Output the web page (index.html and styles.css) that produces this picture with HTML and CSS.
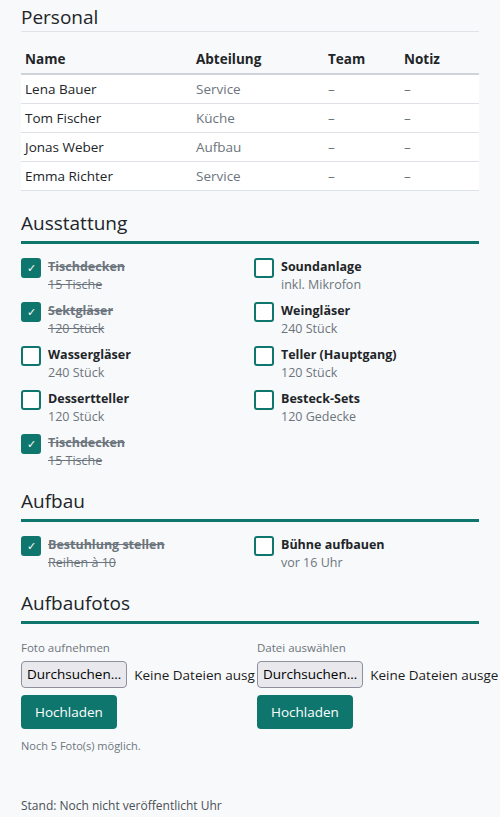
FILE: index.html
```html
<!DOCTYPE html>
<html lang="de">
<head>
<meta charset="utf-8">
<title>Aufbau</title>
<link rel="stylesheet" href="styles.css">
</head>
<body>
<main class="page">
  <section class="block">
    <h2 class="title title-plain">Personal</h2>
    <table class="staff">
      <thead>
        <tr><th class="c-name">Name</th><th class="c-dept">Abteilung</th><th class="c-team">Team</th><th class="c-note">Notiz</th></tr>
      </thead>
      <tbody>
        <tr><td>Lena Bauer</td><td class="muted">Service</td><td class="muted">–</td><td class="muted">–</td></tr>
        <tr><td>Tom Fischer</td><td class="muted">Küche</td><td class="muted">–</td><td class="muted">–</td></tr>
        <tr><td>Jonas Weber</td><td class="muted">Aufbau</td><td class="muted">–</td><td class="muted">–</td></tr>
        <tr><td>Emma Richter</td><td class="muted">Service</td><td class="muted">–</td><td class="muted">–</td></tr>
      </tbody>
    </table>
  </section>

  <section class="block">
    <h2 class="title">Ausstattung</h2>
    <div class="checks">
      <div class="check done"><span class="box">✓</span><div class="txt"><div class="t">Tischdecken</div><div class="s">15 Tische</div></div></div>
      <div class="check"><span class="box"></span><div class="txt"><div class="t">Soundanlage</div><div class="s">inkl. Mikrofon</div></div></div>
      <div class="check done"><span class="box">✓</span><div class="txt"><div class="t">Sektgläser</div><div class="s">120 Stück</div></div></div>
      <div class="check"><span class="box"></span><div class="txt"><div class="t">Weingläser</div><div class="s">240 Stück</div></div></div>
      <div class="check"><span class="box"></span><div class="txt"><div class="t">Wassergläser</div><div class="s">240 Stück</div></div></div>
      <div class="check"><span class="box"></span><div class="txt"><div class="t">Teller (Hauptgang)</div><div class="s">120 Stück</div></div></div>
      <div class="check"><span class="box"></span><div class="txt"><div class="t">Dessertteller</div><div class="s">120 Stück</div></div></div>
      <div class="check"><span class="box"></span><div class="txt"><div class="t">Besteck-Sets</div><div class="s">120 Gedecke</div></div></div>
      <div class="check done"><span class="box">✓</span><div class="txt"><div class="t">Tischdecken</div><div class="s">15 Tische</div></div></div>
    </div>
  </section>

  <section class="block">
    <h2 class="title">Aufbau</h2>
    <div class="checks">
      <div class="check done"><span class="box">✓</span><div class="txt"><div class="t">Bestuhlung stellen</div><div class="s">Reihen à 10</div></div></div>
      <div class="check"><span class="box"></span><div class="txt"><div class="t">Bühne aufbauen</div><div class="s">vor 16 Uhr</div></div></div>
    </div>
  </section>

  <section class="block photos">
    <h2 class="title">Aufbaufotos</h2>
    <div class="uploads">
      <div class="upload">
        <div class="label">Foto aufnehmen</div>
        <div class="file"><span class="file-btn">Durchsuchen…</span><span class="file-txt">Keine Dateien ausg</span></div>
        <button class="primary" type="button">Hochladen</button>
        <div class="hint">Noch 5 Foto(s) möglich.</div>
      </div>
      <div class="upload">
        <div class="label">Datei auswählen</div>
        <div class="file"><span class="file-btn">Durchsuchen…</span><span class="file-txt">Keine Dateien ausge</span></div>
        <button class="primary" type="button">Hochladen</button>
      </div>
    </div>
  </section>

  <footer class="stand">Stand: Noch nicht veröffentlicht Uhr</footer>
</main>
</body>
</html>
```

FILE: styles.css
```css
html, body {
  margin: 0;
  padding: 0;
  overflow-x: hidden;
}
body {
  background: #f8f9fa;
  color: #212529;
  font-family: "Open Sans", "Noto Sans", sans-serif;
  font-size: 13.5px;
}
.page {
  width: 458px;
  padding: 1px 21px 0 21px;
}
.block {
  margin-bottom: 20px;
}
.title {
  margin: 0 0 14px 0;
  font-size: 19px;
  font-weight: 500;
  line-height: 24px;
  padding-bottom: 6px;
  border-bottom: 3px solid #0f766e;
  color: #212529;
}
.title-plain {
  margin-top: 4px;
  padding-bottom: 2px;
  border-bottom: 1px solid #dfe2e6;
  margin-bottom: 13px;
}
.staff {
  width: 100%;
  border-collapse: collapse;
}
.staff th {
  text-align: left;
  font-weight: 700;
  font-size: 13.5px;
  height: 28px;
  padding: 0 4px;
  border-bottom: 2px solid #ced4da;
}
.staff td {
  height: 28px;
  padding: 0 4px;
  background: #fff;
  border-bottom: 1px solid #dee2e6;
}
.staff .c-name { width: 163px; }
.staff .c-dept { width: 124px; }
.staff .c-team { width: 68px; }
.muted { color: #6c757d; }
.checks {
  display: grid;
  grid-template-columns: 225px 225px;
  column-gap: 8px;
  row-gap: 9px;
}
.check {
  display: flex;
  gap: 7px;
  align-items: flex-start;
}
.box {
  flex: none;
  width: 16px;
  height: 16px;
  border: 2px solid #0f766e;
  border-radius: 3px;
  background: #fff;
  color: #fff;
  font-size: 11px;
  line-height: 16px;
  text-align: center;
}
.done .box {
  background: #0f766e;
}
.t {
  font-weight: 700;
  font-size: 12.5px;
  line-height: 18px;
  color: #212529;
}
.s {
  font-size: 12.5px;
  line-height: 17px;
  color: #6c757d;
}
.done .t, .done .s {
  color: #6c757d;
  text-decoration: line-through;
}
.photos .title { margin-bottom: 16px; }
.uploads {
  display: grid;
  grid-template-columns: 236px 236px;
}
.upload {
  display: flex;
  flex-direction: column;
  align-items: flex-start;
}
.label {
  font-size: 11.5px;
  color: #6c757d;
  line-height: 16px;
  margin-bottom: 5px;
}
.file {
  display: flex;
  align-items: center;
  white-space: nowrap;
}
.file-btn {
  flex: none;
  box-sizing: border-box;
  height: 27px;
  line-height: 25px;
  padding: 0 5px;
  border: 1px solid #8f8f9d;
  border-radius: 4px;
  background: #e9e9ed;
  color: #000;
  font-size: 13.5px;
}
.file-txt {
  margin-left: 7px;
  color: #1b1b1b;
  font-size: 13.5px;
}
.primary {
  margin-top: 7px;
  height: 34px;
  padding: 0 14px;
  border: 0;
  border-radius: 4px;
  background: #0f766e;
  color: #fff;
  font-family: "Open Sans", sans-serif;
  font-size: 13.5px;
}
.hint {
  margin-top: 9px;
  font-size: 11px;
  color: #6c757d;
}
.stand {
  margin-top: 44px;
  font-size: 12px;
  color: #495057;
}
```
